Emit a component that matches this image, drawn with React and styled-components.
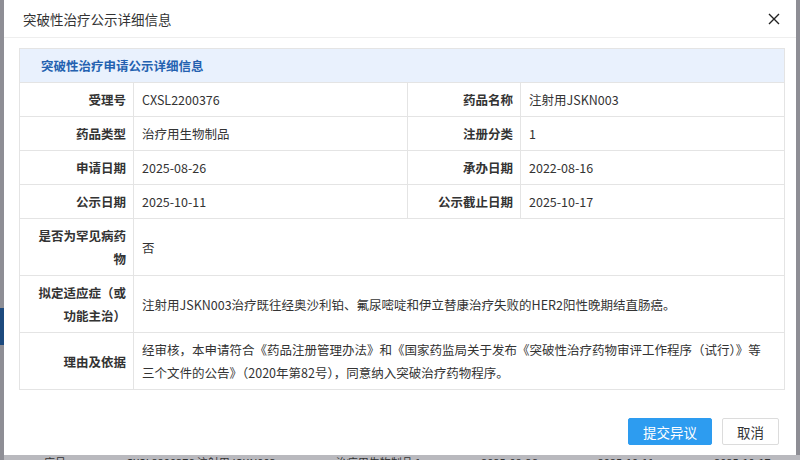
import React from "react";
import styled, { createGlobalStyle } from "styled-components";

const GlobalStyle = createGlobalStyle`
  html, body {
    margin: 0;
    padding: 0;
    width: 800px;
    height: 460px;
    overflow: hidden;
    font-family: "Noto Sans CJK SC", "Noto Sans", sans-serif;
    color: #333;
  }
`;

const Page = styled.div`
  position: relative;
  width: 800px;
  height: 460px;
  overflow: hidden;
  background: #8e8e95;
  display: flex;
`;

const SideStrip = styled.div`
  width: 4px;
  display: flex;
  flex-direction: column;
  padding-top: 308px;
`;

const ActiveMenu = styled.div`
  height: 37px;
  background: #1d4a7e;
`;

const PageBody = styled.div`
  flex: 1;
  display: flex;
  flex-direction: column;
  justify-content: flex-end;
`;

const BgRow = styled.div`
  height: 5px;
  overflow: hidden;
  background: #b9b9be;
  display: flex;
  gap: 60px;
  padding-left: 40px;
  font-size: 11px;
  line-height: 14px;
  color: #333;
  white-space: nowrap;
`;

const Dialog = styled.div`
  position: absolute;
  left: 4px;
  top: 0;
  width: 792px;
  height: 455px;
  background: #fff;
  display: flex;
  flex-direction: column;
`;

const Header = styled.div`
  height: 38px;
  border-bottom: 1px solid #eee;
  box-sizing: border-box;
  display: flex;
  align-items: center;
  justify-content: space-between;
  padding: 0 14px 0 19px;
`;

const Title = styled.div`
  font-size: 13.5px;
  color: #333;
`;

const CloseButton = styled.button`
  border: none;
  background: none;
  padding: 0;
  width: 16px;
  height: 16px;
  display: flex;
  align-items: center;
  justify-content: center;
  cursor: pointer;
`;

const Body = styled.div`
  flex: 1;
  padding: 10px 12px 0 15px;
`;

const Table = styled.table`
  width: 765px;
  border-collapse: collapse;
  table-layout: fixed;
  font-size: 12.5px;
  border: 1px solid #e4e4e4;
`;

const SectionCell = styled.th`
  height: 34px;
  box-sizing: border-box;
  background: #e9f1fd;
  color: #2461b0;
  font-weight: 700;
  text-align: left;
  padding: 0 0 0 21px;
  font-size: 12.5px;
  border-bottom: 1px solid #e4e4e4;
`;

const Label = styled.td`
  border: 1px solid #e4e4e4;
  text-align: right;
  font-weight: 700;
  color: #333;
  line-height: 23px;
  padding: 5px 7px 5px 10px;
  vertical-align: middle;
`;

const Value = styled.td`
  border: 1px solid #e4e4e4;
  color: #333;
  line-height: 23px;
  padding: 5px 8px 5px 8px;
  vertical-align: middle;
`;

const Footer = styled.div`
  display: flex;
  justify-content: flex-end;
  gap: 10px;
  padding: 0 17px 10px 0;
`;

const Button = styled.button`
  height: 27px;
  padding: 0 ${(p) => (p.$primary ? "14px" : "14px")};
  font-family: inherit;
  font-size: 13.5px;
  border-radius: 2px;
  border: 1px solid ${(p) => (p.$primary ? "#2d9cf0" : "#dcdcdc")};
  background: ${(p) => (p.$primary ? "#2d9cf0" : "#fff")};
  color: ${(p) => (p.$primary ? "#fff" : "#333")};
  cursor: pointer;
`;

const rows = [
  ["受理号", "CXSL2200376", "药品名称", "注射用JSKN003"],
  ["药品类型", "治疗用生物制品", "注册分类", "1"],
  ["申请日期", "2025-08-26", "承办日期", "2022-08-16"],
  ["公示日期", "2025-10-11", "公示截止日期", "2025-10-17"],
];

export default function App() {
  return (
    <>
      <GlobalStyle />
      <Page>
        <SideStrip>
          <ActiveMenu />
        </SideStrip>
        <PageBody>
          <BgRow>
            <span>序号</span>
            <span>CXSL2200376 注射用JSKN003</span>
            <span>治疗用生物制品 1</span>
            <span>2025-08-26</span>
            <span>2025-10-11</span>
            <span>2025-10-17</span>
          </BgRow>
        </PageBody>
        <Dialog>
          <Header>
            <Title>突破性治疗公示详细信息</Title>
            <CloseButton aria-label="关闭">
              <svg width="12" height="12" viewBox="0 0 12 12">
                <path d="M1 1L11 11M11 1L1 11" stroke="#222" strokeWidth="1.4" />
              </svg>
            </CloseButton>
          </Header>
          <Body>
            <Table>
              <colgroup>
                <col style={{ width: 114 }} />
                <col style={{ width: 274 }} />
                <col style={{ width: 113 }} />
                <col style={{ width: 264 }} />
              </colgroup>
              <tbody>
                <tr>
                  <SectionCell colSpan={4}>突破性治疗申请公示详细信息</SectionCell>
                </tr>
                {rows.map((r) => (
                  <tr key={r[0]}>
                    <Label>{r[0]}</Label>
                    <Value>{r[1]}</Value>
                    <Label>{r[2]}</Label>
                    <Value>{r[3]}</Value>
                  </tr>
                ))}
                <tr>
                  <Label>是否为罕见病药物</Label>
                  <Value colSpan={3}>否</Value>
                </tr>
                <tr>
                  <Label>拟定适应症（或功能主治）</Label>
                  <Value colSpan={3}>
                    注射用JSKN003治疗既往经奥沙利铂、氟尿嘧啶和伊立替康治疗失败的HER2阳性晚期结直肠癌。
                  </Value>
                </tr>
                <tr>
                  <Label>理由及依据</Label>
                  <Value colSpan={3}>
                    经审核，本申请符合《药品注册管理办法》和《国家药监局关于发布《突破性治疗药物审评工作程序（试行）》等
                    <br />
                    三个文件的公告》（2020年第82号），同意纳入突破治疗药物程序。
                  </Value>
                </tr>
              </tbody>
            </Table>
          </Body>
          <Footer>
            <Button $primary>提交异议</Button>
            <Button>取消</Button>
          </Footer>
        </Dialog>
      </Page>
    </>
  );
}
